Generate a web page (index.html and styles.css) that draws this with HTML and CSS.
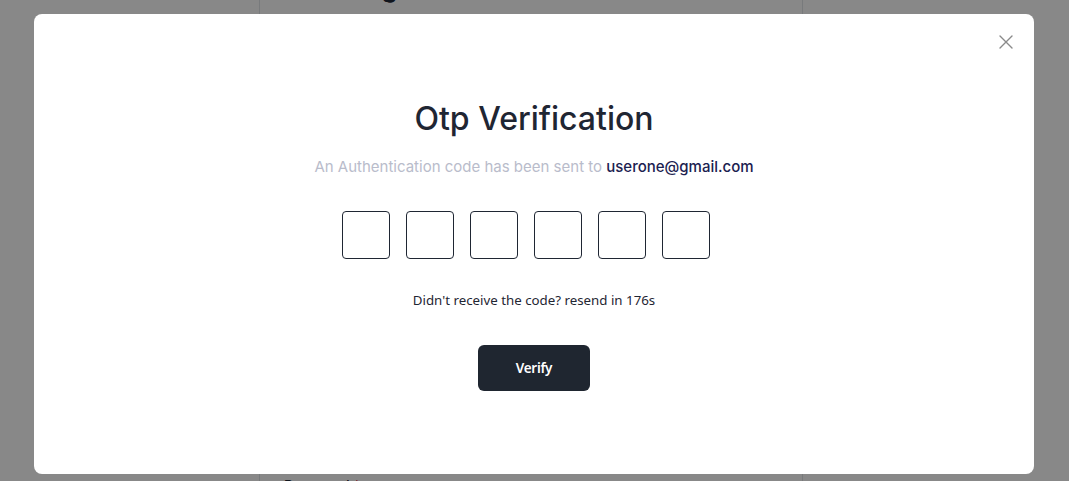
FILE: index.html
```html
<!DOCTYPE html>
<html lang="en">
<head>
<meta charset="utf-8">
<title>Otp Verification</title>
<link rel="stylesheet" href="styles.css">
</head>
<body>
<div class="page">
  <div class="column">
    <h1 class="page-title">Let's Begin</h1>
    <div class="spacer"></div>
    <label class="field-label">Password <span class="req">*</span></label>
  </div>
</div>

<div class="overlay">
  <div class="modal">
    <button class="close" aria-label="Close">
      <svg width="14" height="14" viewBox="0 0 14 14"><path d="M1 1L13 13M13 1L1 13" stroke="#8a8a8a" stroke-width="1.4" stroke-linecap="round" fill="none"/></svg>
    </button>
    <h2 class="title">Otp Verification</h2>
    <p class="subtitle">An Authentication code has been sent to <span class="email">userone@gmail.com</span></p>
    <div class="otp">
      <input class="otp-box" maxlength="1">
      <input class="otp-box" maxlength="1">
      <input class="otp-box" maxlength="1">
      <input class="otp-box" maxlength="1">
      <input class="otp-box" maxlength="1">
      <input class="otp-box" maxlength="1">
    </div>
    <p class="resend">Didn't receive the code? resend in 176s</p>
    <button class="verify">Verify</button>
  </div>
</div>
</body>
</html>
```

FILE: styles.css
```css
* { box-sizing: border-box; }
html, body { margin: 0; padding: 0; }
body {
  width: 1069px;
  height: 481px;
  overflow: hidden;
  background: #ffffff;
  font-family: Inter, "Noto Sans", sans-serif;
}
.page {
  display: flex;
  justify-content: flex-start;
  padding-left: 259px;
  height: 481px;
}
.column {
  width: 544px;
  height: 481px;
  border-left: 1px solid #e2e4e8;
  border-right: 1px solid #e2e4e8;
  padding: 0 24px;
  display: flex;
  flex-direction: column;
}
.page-title {
  margin: -30px 0 0 0;
  font-size: 25px;
  line-height: 36px;
  font-weight: 700;
  color: #1f2937;
}
.spacer { flex: 1; }
.field-label {
  font-size: 14px;
  font-weight: 500;
  color: #1f2937;
  line-height: 18px;
  margin-bottom: -14px;
}
.req { color: #e11d48; }

.overlay {
  position: fixed;
  inset: 0;
  background: rgba(0, 0, 0, 0.465);
  display: flex;
  justify-content: flex-start;
  align-items: flex-start;
  padding: 14px 0 0 34px;
}
.modal {
  position: relative;
  width: 1000px;
  height: 460px;
  background: #ffffff;
  border-radius: 8px;
  display: flex;
  flex-direction: column;
  align-items: center;
  padding-top: 85px;
}
.close {
  position: absolute;
  top: 21px;
  right: 21px;
  width: 14px;
  height: 14px;
  padding: 0;
  border: none;
  background: none;
  display: flex;
}
.title {
  margin: 0;
  font-size: 32px;
  line-height: 40px;
  font-weight: 500;
  color: #1f2633;
}
.subtitle {
  margin: 18px 0 0 0;
  font-size: 15px;
  line-height: 20px;
  color: #b9bccb;
}
.email {
  color: #1b2150;
  font-weight: 500;
}
.otp {
  display: flex;
  gap: 16px;
  margin-top: 34px;
  padding-right: 16px;
}
.otp-box {
  width: 48px;
  height: 48px;
  border: 1px solid #1f2633;
  border-radius: 4px;
  background: #fff;
  padding: 0;
  text-align: center;
  font-size: 18px;
}
.resend {
  margin: 31px 0 0 0;
  font-family: "Noto Sans", sans-serif;
  font-size: 13.3px;
  line-height: 20px;
  color: #1f2633;
}
.verify {
  margin-top: 35px;
  width: 112px;
  height: 46px;
  background: #1f2630;
  color: #ffffff;
  border: none;
  border-radius: 6px;
  font-family: "Noto Sans", sans-serif;
  font-size: 13.5px;
  font-weight: 600;
  letter-spacing: -0.3px;
}
```
